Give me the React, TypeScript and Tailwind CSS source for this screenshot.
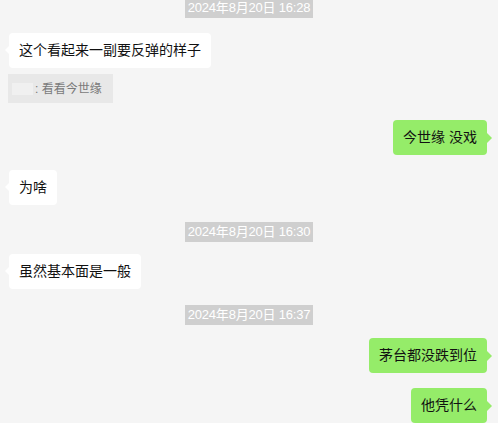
const font = { fontFamily: '"Liberation Sans", "Noto Sans CJK SC", sans-serif' };

function Time({ text, className }: { text: string; className: string }) {
  return (
    <div className={`flex justify-center ${className}`}>
      <div className="h-[20px] px-[3px] bg-[#cfcfcf] text-white text-[13px] leading-[20px] tracking-[-0.2px]">
        {text}
      </div>
    </div>
  );
}

function Left({ text, className }: { text: string; className: string }) {
  return (
    <div className={`flex pl-[9px] ${className}`}>
      <div className="relative h-[35px] px-[10px] flex items-center bg-white rounded-[4px] text-[14px] text-[#111]">
        <span className="absolute left-[-4px] top-[13px] w-0 h-0 border-y-[4px] border-y-transparent border-r-[4px] border-r-white" />
        {text}
      </div>
    </div>
  );
}

function Right({ text, className }: { text: string; className: string }) {
  return (
    <div className={`flex justify-end pr-[11px] ${className}`}>
      <div className="relative h-[35px] px-[10px] flex items-center bg-[#95ec69] rounded-[4px] text-[14px] text-[#111]">
        {text}
        <span className="absolute right-[-5px] top-[13px] w-0 h-0 border-y-[5px] border-y-transparent border-l-[5px] border-l-[#95ec69]" />
      </div>
    </div>
  );
}

export default function App() {
  return (
    <div className="w-[498px] h-[423px] overflow-hidden bg-[#f5f5f5]" style={font}>
      <div className="flex flex-col">
        <Time text="2024年8月20日 16:28" className="-mt-[2px]" />
        <Left text="这个看起来一副要反弹的样子" className="mt-[15px]" />
        <div className="flex pl-[8px] mt-[6px]">
          <div className="h-[29px] w-[105px] bg-[#e8e8e8] flex items-center pl-[4px] text-[12px] text-[#7a7a7a]">
            <span className="w-[21px] h-[12px] bg-[#f0f0f0] mr-[2px]" />
            <span>: 看看今世缘</span>
          </div>
        </div>
        <Right text="今世缘 没戏" className="mt-[17px]" />
        <Left text="为啥" className="mt-[15px]" />
        <Time text="2024年8月20日 16:30" className="mt-[17px]" />
        <Left text="虽然基本面是一般" className="mt-[12px]" />
        <Time text="2024年8月20日 16:37" className="mt-[16px]" />
        <Right text="茅台都没跌到位" className="mt-[13px]" />
        <Right text="他凭什么" className="mt-[15px]" />
      </div>
    </div>
  );
}
